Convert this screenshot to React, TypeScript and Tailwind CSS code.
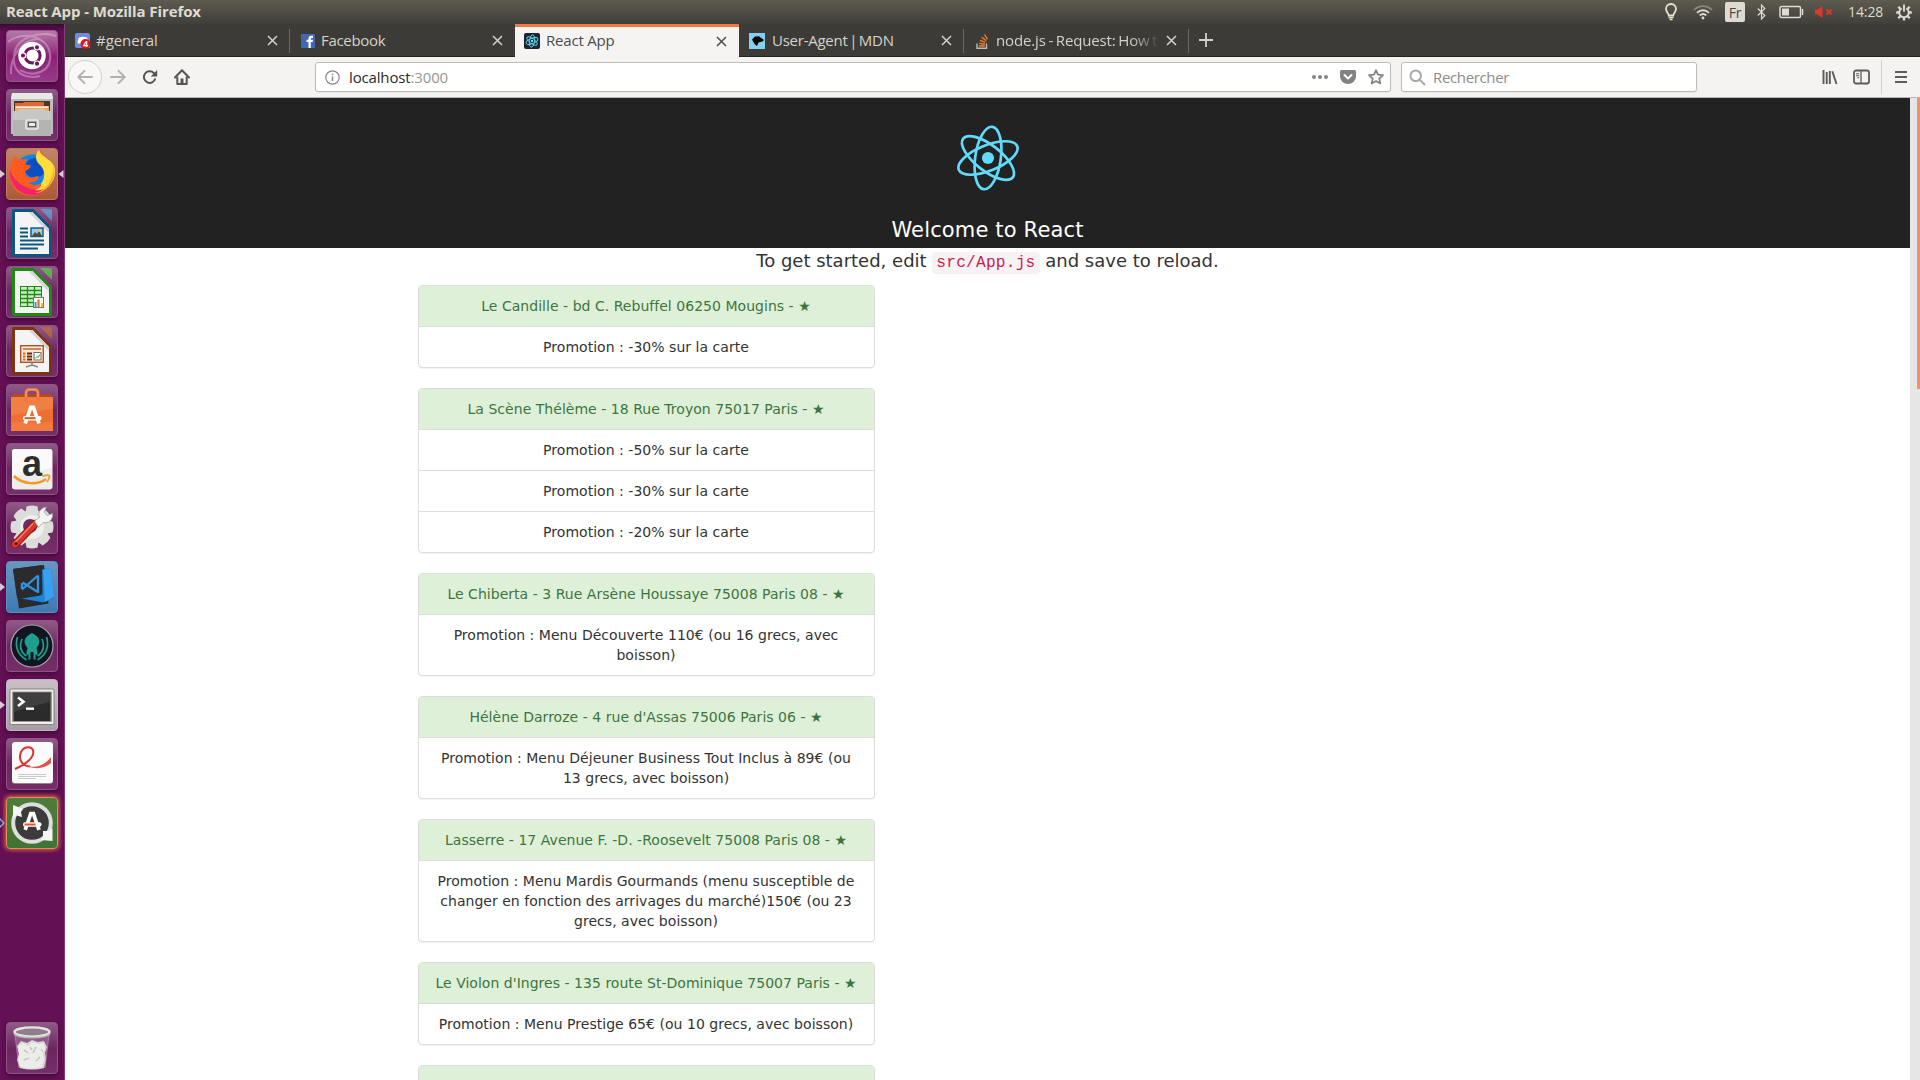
import React from "react";

type Kids = { children?: React.ReactNode };

const restaurants: { title: string; promos: string[] }[] = [
  { title: "Le Candille - bd C. Rebuffel 06250 Mougins - ★", promos: ["Promotion : -30% sur la carte"] },
  {
    title: "La Scène Thélème - 18 Rue Troyon 75017 Paris - ★",
    promos: ["Promotion : -50% sur la carte", "Promotion : -30% sur la carte", "Promotion : -20% sur la carte"],
  },
  {
    title: "Le Chiberta - 3 Rue Arsène Houssaye 75008 Paris 08 - ★",
    promos: ["Promotion : Menu Découverte 110€ (ou 16 grecs, avec boisson)"],
  },
  {
    title: "Hélène Darroze - 4 rue d'Assas 75006 Paris 06 - ★",
    promos: ["Promotion : Menu Déjeuner Business Tout Inclus à 89€ (ou 13 grecs, avec boisson)"],
  },
  {
    title: "Lasserre - 17 Avenue F. -D. -Roosevelt 75008 Paris 08 - ★",
    promos: [
      "Promotion : Menu Mardis Gourmands (menu susceptible de changer en fonction des arrivages du marché)150€ (ou 23 grecs, avec boisson)",
    ],
  },
  {
    title: "Le Violon d'Ingres - 135 route St-Dominique 75007 Paris - ★",
    promos: ["Promotion : Menu Prestige 65€ (ou 10 grecs, avec boisson)"],
  },
  { title: "", promos: [] },
];

function ReactMark({ size, stroke = 2.7 }: { size: number; stroke?: number }) {
  return (
    <svg width={size} height={size} viewBox="-40 -40 80 80" fill="none" stroke="#61dafb" strokeWidth={stroke}>
      <circle r="6.1" fill="#61dafb" stroke="none" />
      <ellipse rx="31.5" ry="12.8" transform="rotate(-22)" />
      <ellipse rx="31.5" ry="12.8" transform="rotate(-82)" />
      <ellipse rx="31.5" ry="12.8" transform="rotate(38)" />
    </svg>
  );
}

/* ---------- Top panel ---------- */

function TopPanel() {
  return (
    <div className="flex h-6 shrink-0 items-center justify-between bg-gradient-to-b from-[#5d5a50] to-[#403f3a] pl-[6px] pr-2">
      <span className="pb-[2px] text-[15px] leading-[22px] font-bold text-[#dfdbd2] tracking-[-0.1px]">React App - Mozilla Firefox</span>
      <div className="flex h-6 items-center">
        <svg width="14" height="18" viewBox="0 0 14 18" fill="none" stroke="#e9e3cf" strokeWidth="1.8" className="mr-[15px]">
          <path d="M4.8 12.5C4.8 10.5 2 9.2 2 6a5 5 0 0 1 10 0c0 3.2-2.8 4.500-2.800 6.500z" />
          <path d="M4.500 14.500h5M5.500 16.500h3" strokeWidth="1.500" />
        </svg>
        <svg width="20" height="16" viewBox="0 0 20 16" fill="none" stroke="#dfdbd2" strokeWidth="1.800" className="mr-3">
          <path d="M1 6C6 .8 14 .8 19 6" stroke="#8b8880" />
          <path d="M4 8.800c3.500-3.400 8.500-3.400 12 0M6.800 11.500c2-1.900 4.400-1.900 6.400 0" />
          <circle cx="10" cy="14" r="1.400" fill="#dfdbd2" stroke="none" />
        </svg>
        <div className="mr-3 flex h-5 w-5 items-center justify-center rounded-[2px] bg-[#dfdbd2] text-[14px] text-[#4a4840] tracking-[-0.3px]">Fr</div>
        <svg width="9" height="16" viewBox="0 0 9 16" fill="none" stroke="#dfdbd2" strokeWidth="1.200" className="mr-[13px]">
          <path d="M.8 4.500l7 7L4.500 15V1l3.300 3.500-7 7" />
        </svg>
        <svg width="25" height="14" viewBox="0 0 25 14" fill="none" stroke="#dfdbd2" strokeWidth="1.500" className="mr-[11px]">
          <rect x="1" y="1.500" width="20.500" height="11" rx="1.500" />
          <path d="M23.500 4v6" />
          <rect x="3" y="3.500" width="7" height="7" fill="#dfdbd2" stroke="none" />
        </svg>
        <svg width="18" height="14" viewBox="0 0 18 14" className="mr-[15px]">
          <path d="M0 4.500h2.500L7.500 1v12l-5-3.500H0z" fill="#df382c" />
          <path d="M11.500 4.500l5 5m0-5l-5 5" stroke="#df382c" strokeWidth="2" />
        </svg>
        <span className="mr-[13px] w-[35px] text-[14px] leading-6 text-[#dfdbd2] tracking-[-0.1px]">14:28</span>
        <svg width="16" height="17" viewBox="-8 -8.500 16 17" fill="none" stroke="#dfdbd2">
          <path d="M-2.300-4.200a4.800 4.800 0 1 0 4.600 0M0-8V-1" strokeWidth="1.900" />
          <path d="M5 0h2.800M-5 0h-2.800M0 5v3M3.500 3.500l2.200 2.200M-3.500 3.500l-2.200 2.200M3.800-3.800l1.900-1.900M-3.800-3.800l-1.900-1.900" strokeWidth="2.300" />
        </svg>
      </div>
    </div>
  );
}

/* ---------- Launcher ---------- */

const A = (
  <g>
    <path d="M19.200 39.500L24.800 23.300h2.600L33 39.500" fill="none" stroke="#fff" strokeWidth="3.700" />
    <rect x="17" y="32" width="18.500" height="4.400" rx="2" fill="#fff" />
    <rect x="18.500" y="33.200" width="11" height="2" fill="#e95420" />
  </g>
);

function DocPage({ dark, light, children }: Kids & { dark: string; light: string }) {
  return (
    <g>
      <path d="M8 2h19.500L46 21v29H8a2 2 0 0 1-2-2V4a2 2 0 0 1 2-2z" fill={dark} />
      <path d="M34 2h10a2 2 0 0 1 2 2v10z" fill={light} opacity=".75" />
      <path d="M9 5h17.500L43 22v25H9z" fill="#f4f4f4" />
      <path d="M26.500 5L43 22v4L22.500 5z" fill="#d4d4d4" />
      {children}
    </g>
  );
}

const dashIcon = (
  <g>
    <g fill="none" stroke="#f0cbe8" strokeWidth="2" opacity=".4">
      <path d="M2 12C16 0 42 6 44 24S28 48 14 40" />
      <path d="M50 6C38 2 10 4 8 26s18 22 26 20" />
      <path d="M5 44C4 30 14 8 34 9" />
    </g>
    <circle cx="26" cy="26" r="14.500" fill="#5e1a52" opacity=".4" />
    <circle cx="26" cy="25.500" r="13.800" fill="#fff" />
    <circle cx="26.500" cy="25.500" r="7.600" fill="none" stroke="#6d1a5c" strokeWidth="3" />
    <g fill="#6d1a5c" stroke="#fff" strokeWidth="1.200">
      <circle cx="17" cy="25.500" r="2.700" />
      <circle cx="31" cy="17.300" r="2.700" />
      <circle cx="31" cy="33.700" r="2.700" />
    </g>
  </g>
);

const filesIcon = (
  <g>
    <path d="M6 4h40l1 5v36H5V9z" fill="#bdbdbb" />
    <path d="M6 4h40l1 6H5z" fill="#e8e8e6" />
    <rect x="8" y="12" width="36" height="12" fill="#4e3525" />
    <path d="M9 14h8l1-1h20v9H9z" fill="#dd6a35" />
    <path d="M9 17h34v7H9z" fill="#f3a765" />
    <path d="M10 17.500h32v1.500H10z" fill="#fff1dc" />
    <path d="M7 22h5l1-2h26l1 2h5v25H7z" fill="#b4b4b2" />
    <path d="M7 22h5l1-2h26l1 2h5v9H7z" fill="#c7c7c5" />
    <rect x="20" y="31" width="12" height="9" rx="1.500" fill="#aaa" stroke="#ebebe9" strokeWidth="1.600" />
    <rect x="22.500" y="33.500" width="7" height="4" fill="#eee" stroke="#555" />
  </g>
);

const firefoxIcon = (
  <g>
    <circle cx="27" cy="26" r="19.500" fill="#0a84e8" />
    <circle cx="29" cy="20" r="10" fill="#0a4fc4" />
    <path d="M9 8c1 2 3 3.500 6 3.500 3-.5 5-.5 7 0-2 1.500-3 3-3 5l6 1c-.5 3-4 4-6 6 0 3 2 6 6 6 3 0 5-2 8-1-1 5-7 7-11 6 6 5 17 2 18-7 .5-5-1-8-4-11l-5-9c0-3 2-5 4-6 1 7 9 9 11 17 3 10-1 20-9 26-9 5-21 4-28-3C1 31 2 18 9 8z" fill="#ff5a1f" />
    <path d="M4 22c-1 12 8 25 22 25 9 0 17-6 20-14-4 6-12 10-20 8C15 38 7 32 4 22z" fill="#f0246a" />
    <path d="M33 2c-4 4-4 10 0 14 6 5 7 13 2 20 1 3-3 5-6 6 8 2 20-5 20-18 0-10-6-11-10-15-3-2-5-4-6-7z" fill="#ffdd3c" />
    <path d="M47 19c3 9-1 19-10 24-3 2-7 2-10 2 10 0 20-10 20-26z" fill="#ffb020" />
  </g>
);

const writerIcon = (
  <DocPage dark="#0c5685" light="#5aa5d6">
    <path d="M14 21.500h8M14 25.500h8M14 29.500h8M14 33.500h24M14 37.500h24M14 41.500h18" stroke="#0c5685" strokeWidth="1.800" />
    <rect x="25" y="21" width="12" height="8.500" fill="#9cc9ea" stroke="#0c5685" strokeWidth="1.400" />
    <path d="M26 29l3-4 2 2 2-3 3 5z" fill="#5b4b35" />
    <circle cx="34" cy="23.500" r="1.200" fill="#ffd23c" />
  </DocPage>
);

const calcIcon = (
  <DocPage dark="#1d8a12" light="#55c94a">
    <rect x="14.500" y="20.500" width="21" height="20" fill="#ccefc4" stroke="#1d8a12" />
    <path d="M15 24.500h20M15 28.500h20M15 32.500h20M15 36.500h20M21.500 21v20M28.500 21v20" stroke="#1d8a12" strokeWidth="1.300" />
    <rect x="27.500" y="31.500" width="10" height="10" fill="#fff" stroke="#777" />
    <path d="M29.500 41v-5" stroke="#2fa0dc" strokeWidth="2" />
    <path d="M32.500 41v-7.500" stroke="#ec6b1c" strokeWidth="2.200" />
    <path d="M36 41v-4" stroke="#f3c32c" strokeWidth="2" />
  </DocPage>
);

const impressIcon = (
  <DocPage dark="#7e3410" light="#c06c3a">
    <rect x="14.700" y="20.700" width="22.600" height="16.600" fill="#fbe9dc" stroke="#b5531f" strokeWidth="1.400" />
    <path d="M17 24h18" stroke="#d4692f" strokeWidth="1.600" />
    <path d="M17 28.500h2.500M17 31.500h2.500M17 34.500h2.500" stroke="#e0681e" strokeWidth="1.800" />
    <path d="M21 28.500h5M21 31.500h5M21 34.500h5" stroke="#6b2c0c" strokeWidth="1.800" />
    <rect x="28" y="27.500" width="7" height="7.500" fill="#fff" stroke="#6e6e6e" />
    <path d="M29 33.500l2-2 1 1 2-3" stroke="#2aa22a" fill="none" />
    <path d="M26 38v2l-6 2M26 40l6 2" stroke="#888" strokeWidth="1.600" fill="none" />
  </DocPage>
);

const softwareIcon = (
  <g>
    <path d="M5 13l3-3h36l3 3z" fill="#b8481f" />
    <path d="M5 13h42v34H5z" fill="#ee6f33" />
    <path d="M5 13h42v12L5 31z" fill="#f28a50" opacity=".6" />
    <path d="M5 38h42v9H5z" fill="#f58549" opacity=".5" />
    <path d="M20 18V9q0-3.500 3.500-3.500h5Q32 5.500 32 9v9" fill="none" stroke="#f0763f" strokeWidth="2.800" />
    <path d="M20 13V9q0-3.500 3.500-3.500h5Q32 5.500 32 9v4" fill="none" stroke="#f7a27c" strokeWidth="1" />
    {A}
  </g>
);

const amazonIcon = (
  <g>
    <rect x="6" y="6" width="40.500" height="40.500" rx="3" fill="#ededed" />
    <path d="M6 9a3 3 0 0 1 3-3h34a3 3 0 0 1 3 3v16L6 34z" fill="#fafafa" />
    <text x="26" y="33" textAnchor="middle" fontFamily="Liberation Sans" fontWeight="bold" fontSize="36" fill="#2d2d2d">a</text>
    <path d="M8 33c9 9 24 9 32 3" fill="none" stroke="#f79a1c" strokeWidth="2.500" />
    <path d="M36.500 33.500c4-2 7-1.500 7-.5s-1 4-2.500 6" fill="none" stroke="#f79a1c" strokeWidth="1.800" />
  </g>
);

const settingsIcon = (
  <g>
    <g fill="#dcdcda">
      <circle cx="26" cy="25" r="17" />
      {[0, 45, 90, 135, 180, 225, 270, 315].map((a) => (
        <path key={a} d="M20.500 4.500q5.500-2 11 0l1 6h-13z" transform={`rotate(${a} 26 25)`} />
      ))}
    </g>
    <circle cx="26" cy="25" r="12" fill="#eeeeec" />
    <circle cx="24" cy="24" r="7" fill="#6f2a61" />
    <path d="M9 42.500L29 22" stroke="#8e1a14" strokeWidth="8" strokeLinecap="round" />
    <path d="M9 42.500L29 22" stroke="#d9362b" strokeWidth="6" strokeLinecap="round" />
    <path d="M9 40.500L27 21.500" stroke="#f08178" strokeWidth="1.300" strokeLinecap="round" />
    <path d="M28.500 19l5-3.500c-2-5 1.500-10 7-10.500l-2.500 5 3 3.500 5.500-2c1 6-4 10.500-9.500 9l-4.500 5z" fill="#f5f5f3" stroke="#9b9b99" strokeWidth=".7" />
    <circle cx="10" cy="41.500" r="1.500" fill="#5b0f0b" />
  </g>
);

const codeIcon = (
  <g>
    <path d="M20 36l16-4 12 5-11 5z" fill="#1671bd" />
    <path d="M7 8l31-4 4.500 38.500L13 47.500z" fill="#2b2b2d" />
    <path d="M36 8.500L45 7l3 29-10.500 5.500-22-4 19-3z" fill="#1b83d8" />
    <path d="M37 9l8-2 3 29-9 5z" fill="#3a9ff0" />
    <path d="M7 8l29-4 .5 29.500L11 37z" fill="#2b2b2d" />
    <path d="M32 14.500v16.500L16.500 21.500M32 14.500L16 28.500M16 22v6" fill="none" stroke="#2f93e6" strokeWidth="2.300" strokeLinejoin="round" />
  </g>
);

const krakenIcon = (
  <g>
    <circle cx="26" cy="26" r="21" fill="#11151f" stroke="#a9a3a9" strokeWidth="1.200" />
    <path d="M26 13c-6 3-9 7-6.500 12l2 3-1 4v4l2-2v6l2-1v-7h3v7l2 1v-6l2 2v-4l-1-4 2-3c2.500-5-.5-9-6.500-12z" fill="#1c9f8f" />
    <g fill="none" stroke="#1c9f8f" strokeWidth="1.700">
      <path d="M11.500 17c-3 10 1 18 9 23M40.500 17c3 10-1 18-9 23" />
      <path d="M16 19c-3 7-1 13 4 17M36 19c3 7 1 13-4 17" />
    </g>
  </g>
);

const terminalIcon = (
  <g>
    <rect x="4" y="10" width="44" height="35.500" rx="1.500" fill="#f0f0ee" stroke="#85807f" strokeWidth="1" />
    <rect x="6" y="12.500" width="40" height="30.500" fill="#9b9896" />
    <rect x="7.500" y="13.500" width="37" height="28.500" fill="#2b2b2b" />
    <path d="M7.500 13.500h37v9L7.500 33z" fill="#4c4c4c" opacity=".6" />
    <path d="M12 18.500l5.500 4.300-5.500 4.300" fill="none" stroke="#fff" strokeWidth="2.600" />
    <path d="M20 29.700h8" stroke="#fff" strokeWidth="2.400" />
  </g>
);

const pdfIcon = (
  <g>
    <rect x="6" y="5" width="41" height="41" rx="3" fill="#8c8c8c" />
    <rect x="6" y="4" width="41" height="41" rx="3" fill="#fbfbfb" />
    <path d="M9 31c11-5 20-12 18-19-2-4-9-4-12 2-3 7 1 14 9 14.500" fill="none" stroke="#dd3230" strokeWidth="2" />
    <path d="M20 27c9 4 18 1 25-8v6c-6 5-14 7-25 3z" fill="#e2504d" />
    <path d="M12 36.500h28M12 38.500h28M12 40.500h18" stroke="#bdbdbd" strokeWidth=".8" />
  </g>
);

const updaterIcon = (
  <g>
    <circle cx="26" cy="26" r="18.500" fill="#3b3b3b" />
    <circle cx="26" cy="26" r="18.800" fill="none" stroke="#dededc" strokeWidth="4" />
    <path d="M7 8v13l3.500-2.500L16 20l-1-5 2-3z" fill="#f5f5f3" />
    <path d="M46.500 44V31L42 34l-5 0 0 6-2 3z" fill="#f5f5f3" />
    <g transform="translate(0 -6.700)">{A}</g>
  </g>
);

const trashIcon = (
  <g>
    <path d="M9 12h34l-4 34q-13 3-26 0z" fill="#c79dbf" opacity=".35" />
    <path d="M11 24l4-5 6 2 5-3 6 2 6-1 3 6-2 6 1 6-2 9q-12 3-24 0l-3-8 2-6z" fill="#d6d6d3" />
    <path d="M12 24l5-3 5 3 4-4 6 2 6-1 1 7-2 4 1 6-2 7q-11 3-22 0l-2-7 1-6z" fill="#ecece9" />
    <path d="M18 28l4 3M30 25l-3 6M34 35l-4 4M18 38l5-2M24 25l2 3M35 27l2 3" stroke="#bdbdb9" strokeWidth="1.200" />
    <path d="M9 13l4 33M43 13l-4 33" stroke="#d9b8d3" strokeWidth=".8" opacity=".6" />
    <ellipse cx="26" cy="10" rx="17.500" ry="4.600" fill="#8f7f8d" stroke="#e4e4e1" strokeWidth="2.400" />
    <path d="M8 12c5 5 31 5 36 0" fill="none" stroke="#b7b7b4" strokeWidth="1.500" />
  </g>
);

const shade = "shadow-[0_2px_4px_rgba(30,0,25,0.5)]";
const plain = `${shade} border-[#8e5685] bg-gradient-to-b from-[#8f5a87] via-[#6c2560] to-[#762f6a]`;

const launcher: { icon: React.ReactNode; tile: string; left?: string; right?: boolean }[] = [
  { icon: dashIcon, tile: `${shade} border-[#a0508f] bg-gradient-to-b from-[#b57aa9] via-[#8b1f76] to-[#96398a]` },
  { icon: filesIcon, tile: plain },
  { icon: firefoxIcon, tile: `${shade} border-[#c07c5c] bg-gradient-to-b from-[#c08668] to-[#ab5a38]`, left: "#d5ccd6", right: true },
  { icon: writerIcon, tile: plain },
  { icon: calcIcon, tile: plain },
  { icon: impressIcon, tile: plain },
  { icon: softwareIcon, tile: plain },
  { icon: amazonIcon, tile: plain },
  { icon: settingsIcon, tile: plain },
  { icon: codeIcon, tile: `${shade} border-[#5b93c4] bg-gradient-to-b from-[#6797c0] to-[#3d7ab3]`, left: "#d5ccd6" },
  { icon: krakenIcon, tile: plain },
  { icon: terminalIcon, tile: `${shade} border-[#c2b6c0] bg-gradient-to-b from-[#c9c0c8] to-[#a79da6]`, left: "#d5ccd6" },
  { icon: pdfIcon, tile: plain },
  { icon: updaterIcon, tile: "border-[#e98955] bg-gradient-to-b from-[#4d7d3c] to-[#3f7434] shadow-[0_0_4px_1px_#e0703f]", left: "outline" },
];

function Tile({ icon, tile, left, right }: (typeof launcher)[number]) {
  return (
    <div className="relative flex w-full shrink-0 justify-center pr-px">
      <div className={`h-[52px] w-[52px] rounded-[4px] border ${tile}`}>
        <svg width="52" height="52" viewBox="0 0 52 52" className="-m-px max-w-none overflow-visible">{icon}</svg>
      </div>
      {left && (
        <svg width="6" height="10" viewBox="0 0 6 10" className="absolute top-[21px] left-0">
          {left === "outline" ? <path d="M-1 0l5 5-5 5" fill="none" stroke="#7fb6e0" strokeWidth="1.300" /> : <path d="M0 1l5 4-5 4z" fill={left} />}
        </svg>
      )}
      {right && (
        <svg width="6" height="10" viewBox="0 0 6 10" className="absolute top-[21px] right-0">
          <path d="M5.500 1l-5 4 5 4z" fill="#d5ccd6" />
        </svg>
      )}
    </div>
  );
}

function Launcher() {
  return (
    <div className="flex w-[65px] shrink-0 flex-col justify-between border-r border-[#7d3f74] bg-gradient-to-b from-[#3c0a33] via-[#641055] via-[8px] to-[#641055] pt-[6px] pb-[6px]">
      <div className="flex flex-col gap-[7px]">
        {launcher.map((l, i) => (
          <Tile key={i} {...l} />
        ))}
      </div>
      <Tile icon={trashIcon} tile={plain} />
    </div>
  );
}

/* ---------- Browser ---------- */

const discordFav = (
  <svg width="16" height="16" viewBox="0 0 16 16" className="overflow-visible">
    <path d="M2 0h11a2 2 0 0 1 2 2v13H2a2 2 0 0 1-2-2V2a2 2 0 0 1 2-2z" fill="#7289da" />
    <path d="M4 4.500q4-1.500 8 0 1.500 3 1.500 6h-11q0-3 1.500-6z" fill="#fff" />
    <circle cx="10.500" cy="11" r="5" fill="#e0131b" />
    <text x="10.500" y="14.300" fontSize="9" fontWeight="bold" textAnchor="middle" fill="#fff" fontFamily="Open Sans">4</text>
  </svg>
);
const facebookFav = (
  <svg width="16" height="16" viewBox="0 0 16 16">
    <path d="M1 1h14v14H1z" fill="#4267b2" />
    <path d="M8.500 15V9H6.500V6.800h2V5.200Q8.500 2.800 11 2.800h2V5h-1.300q-.9 0-.9.900v.9H13L12.700 9h-1.900v6z" fill="#fff" />
  </svg>
);
const reactFav = (
  <div className="h-4 w-4 rounded-[2px] bg-[#20232a]">
    <ReactMark size={16} stroke={4.5} />
  </div>
);
const mdnFav = (
  <svg width="16" height="16" viewBox="0 0 16 16">
    <path d="M0 0h16v16H0z" fill="#83d0f2" />
    <path d="M3 6.500L6 3.500l4-.3 2.500 2 2 1.300v1.500L11.500 9 9.500 9.500 8 13l-2.500-2z" fill="#000" />
  </svg>
);
const soFav = (
  <svg width="16" height="16" viewBox="0 0 16 16" fill="none">
    <path d="M3 10.500v4.700h9.500v-4.700" stroke="#bcbbbb" strokeWidth="1.400" />
    <path d="M5 13h5.800M5.200 10.400l5.700.8M6 7.400l5.300 2M7.700 4.200l4.600 3.500M10.500 1.500l3 4.800" stroke="#f48024" strokeWidth="1.400" />
  </svg>
);

const tabs: { fav: React.ReactNode; label: string; fit: string; active?: boolean; sep?: boolean; fade?: boolean }[] = [
  { fav: discordFav, label: "#general", fit: "text-[15px] tracking-[-0.05px]", sep: true },
  { fav: facebookFav, label: "Facebook", fit: "text-[15px] tracking-[-0.3px]" },
  { fav: reactFav, label: "React App", fit: "pl-px text-[15px] tracking-[-0.2px]", active: true },
  { fav: mdnFav, label: "User-Agent | MDN", fit: "pl-[2px] text-[15px] tracking-[-0.25px] [word-spacing:-2px]", sep: true },
  { fav: soFav, label: "node.js - Request: How t", fit: "pl-px text-[15px] tracking-[-0.15px] [word-spacing:-1px]", sep: true, fade: true },
];

function TabStrip() {
  return (
    <div className="flex h-[33px] shrink-0 bg-[#3c3b37] text-[14px] text-[#d6d2c9]">
      {tabs.map((t) => (
        <div
          key={t.label}
          className={
            t.active
              ? "flex w-[224px] items-center border-t-[3px] border-[#f07746] bg-[#f5f4f2] pl-[9px] pr-3 pb-[2px] text-[#4c4c4c]"
              : "relative flex w-[225px] items-center border-b border-[#242320] pl-[10px] pr-3 pt-px"
          }
        >
          <span className="shrink-0">{t.fav}</span>
          <span
            className={`ml-[5px] flex-1 overflow-hidden pb-[2px] leading-5 whitespace-nowrap ${t.fit} ${
              t.fade ? "[mask-image:linear-gradient(to_right,#000_82%,transparent_100%)]" : ""
            }`}
          >
            {t.label}
          </span>
          <svg width="11" height="11" viewBox="0 0 11 11" className="ml-[6px] shrink-0" stroke="currentColor" strokeWidth="1.500">
            <path d="M1 1l9 9M10 1l-9 9" />
          </svg>
          {t.sep && <span className="absolute top-[5px] right-0 h-6 w-px bg-[#6a6964]" />}
        </div>
      ))}
      <div className="flex flex-1 items-center border-b border-[#242320] pl-[10px]">
        <svg width="14" height="14" viewBox="0 0 14 14" stroke="#d6d2c9" strokeWidth="1.800">
          <path d="M7 0v14M0 7h14" />
        </svg>
      </div>
    </div>
  );
}

function Toolbar() {
  return (
    <div className="flex h-[41px] shrink-0 items-center border-b border-[#b9b8b5] bg-[#f4f3f1] text-[15px]">
      <div className="ml-[3px] flex h-[34px] w-[34px] items-center justify-center rounded-full border border-[#d2d1ce] bg-[#f9f8f7]">
        <svg width="16" height="16" viewBox="0 0 16 16" fill="none" stroke="#b2b1af" strokeWidth="1.900" strokeLinecap="round" strokeLinejoin="round">
          <path d="M15 8H1.500M7.500 1.800L1.300 8l6.200 6.200" />
        </svg>
      </div>
      <svg width="16" height="16" viewBox="0 0 16 16" fill="none" stroke="#b2b1af" strokeWidth="1.900" strokeLinecap="round" strokeLinejoin="round" className="ml-2">
        <path d="M1 8h13.500M8.500 1.800L14.700 8l-6.200 6.200" />
      </svg>
      <svg width="16" height="16" viewBox="0 0 16 16" fill="none" stroke="#555" strokeWidth="2" className="ml-4">
        <path d="M13.300 9.500A5.800 5.800 0 1 1 11.800 4l1.500 1.600" />
        <path d="M15.200 1v6.500H8.700z" fill="#555" stroke="none" />
      </svg>
      <svg width="16" height="16" viewBox="0 0 16 16" fill="none" stroke="#555" strokeWidth="2" strokeLinejoin="round" className="ml-4">
        <path d="M1 8.500L8 1.300l7 7.200" strokeLinecap="round" />
        <path d="M3.300 7.500V15h9.400V7.500" />
        <path d="M6.500 9.500h3V15h-3z" fill="#555" stroke="none" />
      </svg>
      <div className="ml-[125px] flex h-[30px] w-[1076px] items-center rounded-[3px] border border-[#bdbcba] bg-white pl-[9px] pr-[6px] shadow-[0_1px_1px_rgba(0,0,0,0.06)]">
        <svg width="15" height="15" viewBox="0 0 15 15" fill="none" stroke="#858585" strokeWidth="1.200">
          <circle cx="7.500" cy="7.500" r="6.700" />
          <path d="M7.500 6.500V11M7.500 3.800v1.400" strokeWidth="1.500" />
        </svg>
        <span className="ml-[9px] flex-1 pb-px leading-5 text-[#2a2a2a] tracking-[-0.15px]">
          localhost<span className="text-[#979797]">:3000</span>
        </span>
        <svg width="16" height="16" viewBox="0 0 16 16" fill="#828282">
          <circle cx="2" cy="8" r="2" />
          <circle cx="8" cy="8" r="2" />
          <circle cx="14" cy="8" r="2" />
        </svg>
        <svg width="16" height="16" viewBox="0 0 16 16" className="ml-3">
          <path d="M1.500 1h13q1.500 0 1.500 1.500V7.500a8 7.500 0 0 1-16 0V2.500Q0 1 1.500 1z" fill="#828282" />
          <path d="M4.500 6L8 9.500 11.500 6" fill="none" stroke="#fff" strokeWidth="1.900" strokeLinecap="round" strokeLinejoin="round" />
        </svg>
        <svg width="16" height="16" viewBox="0 0 16 16" fill="none" stroke="#828282" strokeWidth="1.700" strokeLinejoin="round" className="ml-3">
          <path d="M8 1.200l2 4.500 5 .5-3.700 3.300 1 5L8 12l-4.300 2.500 1-5L1 6.200l5-.5z" />
        </svg>
      </div>
      <div className="ml-[10px] flex h-[30px] w-[296px] items-center rounded-[3px] border border-[#bdbcba] bg-white pl-[7px] shadow-[0_1px_1px_rgba(0,0,0,0.06)]">
        <svg width="17" height="17" viewBox="0 0 17 17" fill="none" stroke="#a8a8a8" strokeWidth="2">
          <circle cx="6.700" cy="6.700" r="5.300" />
          <path d="M10.500 10.500l5.500 5.500" />
        </svg>
        <span className="ml-[7px] pb-px leading-5 text-[#8c8c8c] tracking-[-0.35px]">Rechercher</span>
      </div>
      <div className="ml-auto flex h-full items-center">
        <svg width="16" height="16" viewBox="0 0 16 16" fill="none" stroke="#5c5c5a" strokeWidth="1.900" className="mr-[15px]">
          <path d="M1.500 1v14M4.700 3v12M7.800 2v13M10.300 2.200L14.500 15" />
        </svg>
        <svg width="17" height="16" viewBox="0 0 17 16" fill="none" stroke="#5c5c5a" strokeWidth="1.800" className="mr-[11px]">
          <rect x="1" y="1.500" width="15" height="13" rx="2" />
          <path d="M8 2v12" strokeWidth="1.300" />
          <path d="M3 4.800h3.200M3 6.800h3.200M4.200 8.800h2" strokeWidth="1.100" />
        </svg>
        <span className="h-[34px] w-px bg-[#d2d1ce]" />
        <svg width="12" height="14" viewBox="0 0 12 14" stroke="#5c5c5a" strokeWidth="2" className="mr-[13px] ml-[13px]">
          <path d="M0 2h12M0 7h12M0 12h12" />
        </svg>
      </div>
    </div>
  );
}

/* ---------- Page ---------- */

function Panel({ title, promos }: { title: string; promos: string[] }) {
  return (
    <div className="mb-5 rounded-[4px] border border-[#ddd] bg-white text-[14px] leading-5 tracking-[0.03px] shadow-[0_1px_1px_rgba(0,0,0,0.05)]">
      <div className="min-h-10 rounded-t-[3px] bg-[#dff0d8] py-[10px] pr-4 pl-[15px] text-[#3c763d]">{title}</div>
      {promos.map((p) => (
        <div key={p} className="border-t border-[#ddd] py-[10px] pr-4 pl-[15px]">
          {p}
        </div>
      ))}
    </div>
  );
}

function Page() {
  return (
    <div className="flex min-h-0 flex-1 bg-white">
      <div className="min-w-0 flex-1 overflow-hidden text-center font-['DejaVu_Sans',sans-serif] text-[#333]">
        <header className="flex h-[150px] flex-col items-center bg-[#222] pt-5 text-white">
          <ReactMark size={80} />
          <h1 className="mt-[21px] text-[21px] leading-[23px] tracking-[0.15px]">Welcome to React</h1>
        </header>
        <p className="mb-[11px] h-[26px] text-[18px] leading-[26px]">
          To get started, edit{" "}
          <code className="rounded-[4px] bg-[#f9f2f4] px-1 py-[2px] font-['Liberation_Mono',monospace] text-[16.2px] tracking-[0.2px] text-[#c7254e]">src/App.js</code>{" "}
          and save to reload.
        </p>
        <main className="ml-[353px] w-[457px]">
          {restaurants.map((r) => (
            <Panel key={r.title} {...r} />
          ))}
        </main>
      </div>
      <div className="flex w-[10px] shrink-0 justify-end bg-[#e6e6e6]">
        <div className="h-[291px] w-[3px] bg-[#f19069]" />
      </div>
    </div>
  );
}

export default function App() {
  return (
    <div className="flex h-[1080px] w-[1920px] flex-col overflow-hidden font-['Open_Sans',sans-serif]">
      <TopPanel />
      <div className="flex min-h-0 flex-1">
        <Launcher />
        <div className="flex min-w-0 flex-1 flex-col">
          <TabStrip />
          <Toolbar />
          <Page />
        </div>
      </div>
    </div>
  );
}
